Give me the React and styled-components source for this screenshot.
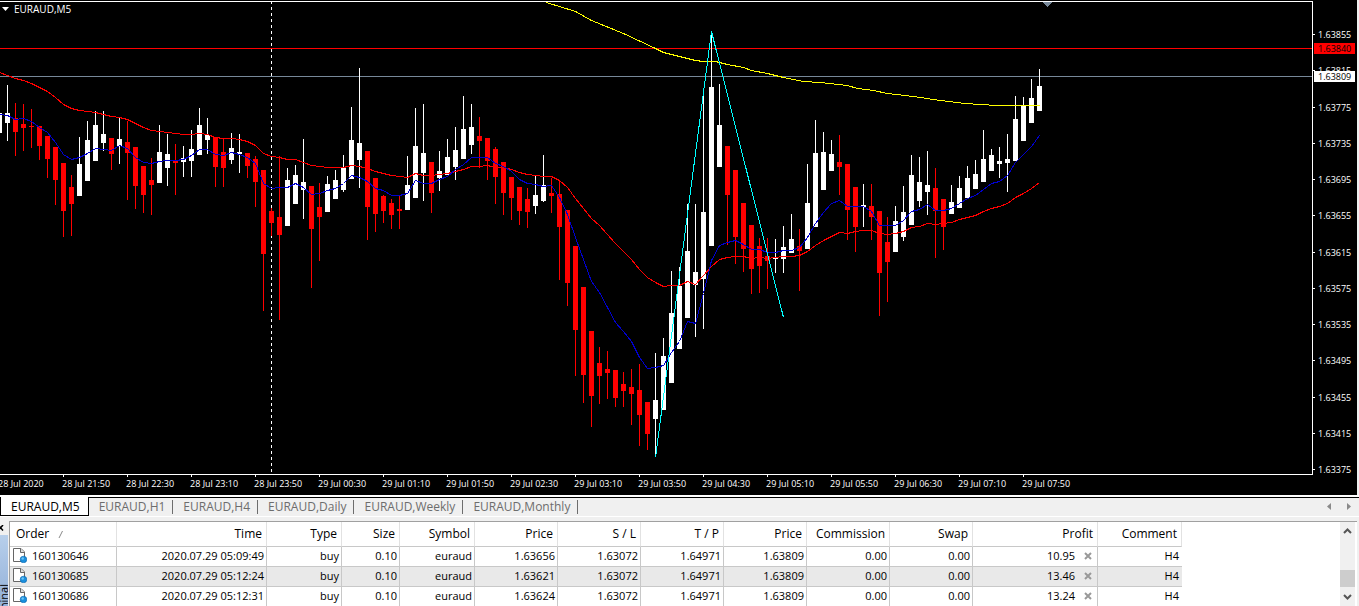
import React, { useState } from "react";
import styled, { createGlobalStyle } from "styled-components";

const GlobalStyle = createGlobalStyle`
  body {
    margin: 0;
    background: #f0f0f0;
    font-family: "Open Sans", "Noto Sans", sans-serif;
    overflow: hidden;
  }

  button {
    font-family: inherit;
    padding: 0;
    border: none;
    background: none;
    cursor: pointer;
  }
`;

const Page = styled.div`
  display: flex;
  flex-direction: column;
  height: 100vh;
  min-height: 400px;
`;

/* ---------- chart ---------- */

const ChartWindow = styled.section`
  display: grid;
  grid-template-columns: 1fr 44px;
  grid-template-rows: 1fr 20px;
  flex: 1;
  min-height: 0;
  margin-right: 2px;
  background: #000;
  color: #fff;
`;

const Plot = styled.div`
  position: relative;
  min-height: 0;
  margin-top: 1px;
  border: 1px solid #fff;
  border-left: none;
`;

const Drawing = styled.svg`
  display: block;
  width: 100%;
  height: 100%;
`;

const ChartTitle = styled.button`
  position: absolute;
  top: 0;
  left: 2px;
  display: flex;
  align-items: center;
  gap: 5px;
  height: 14px;
  color: #fff;
  font-size: 10px;
  line-height: 14px;
`;

const PriceAxis = styled.div`
  grid-column: 2;
  grid-row: 1 / 3;
  min-height: 0;
  padding: 28px 0 19px;
`;

const PriceScale = styled.div`
  position: relative;
  display: flex;
  flex-direction: column;
  justify-content: space-between;
  height: 100%;
  font-size: 9px;
  line-height: 13px;
`;

const PriceLabel = styled.div`
  display: flex;
  align-items: center;
  gap: 3px;

  &::before {
    content: "";
    width: 2px;
    height: 1px;
    background: #fff;
  }
`;

const PriceTag = styled.div`
  position: absolute;
  left: 1px;
  right: 2px;
  height: 11px;
  margin-top: 1px;
  padding-left: 4px;
  line-height: 11px;
  color: #000;
  background: ${(props) => props.$color};
`;

const TimeAxis = styled.div`
  display: grid;
  grid-template-columns: repeat(20, 64fr) 32fr;
  margin: 0 3px 0 -2px;
  font-size: 9px;
  line-height: 13px;
`;

const TimeLabel = styled.div`
  white-space: nowrap;

  &::before {
    content: "";
    display: block;
    width: 1px;
    height: 2px;
    margin-left: 1px;
    background: #fff;
  }
`;

/* ---------- chart tabs ---------- */

const TabBar = styled.nav`
  display: flex;
  justify-content: space-between;
  height: 22px;
  padding-top: 2px;
  box-sizing: border-box;
  border-bottom: 1px solid #fff;
  background: linear-gradient(#fff 2px, #000 2px, #000 3px, #f0f0f0 3px);
  margin-bottom: 4px;
`;

const Tabs = styled.div`
  display: flex;
`;

const Tab = styled.button`
  position: relative;
  height: 19px;
  padding: 0 8px 0 10px;
  font-size: 12px;
  line-height: 19px;
  color: ${(props) => (props.$active ? "#000" : "#6d6d6d")};
  background: ${(props) => (props.$active ? "#fff" : "none")};
  border: ${(props) => (props.$active ? "1px solid #000" : "none")};
  border-top: none;

  &::after {
    content: "";
    display: ${(props) => (props.$active ? "none" : "block")};
    position: absolute;
    top: 3px;
    right: 0;
    width: 1px;
    height: 14px;
    background: #6d6d6d;
  }
`;

const TabScroll = styled.div`
  display: flex;
  align-items: center;
  gap: 14px;
  padding-right: 8px;

  button {
    display: flex;
  }
`;

/* ---------- terminal ---------- */

const Terminal = styled.section`
  display: flex;
  height: 85px;
  overflow: hidden;
`;

const Side = styled.div`
  display: flex;
  flex-direction: column;
  width: 9px;
  overflow: hidden;
`;

const CloseButton = styled.button`
  display: flex;
  height: 14px;
  align-items: center;
`;

const SideTitle = styled.div`
  flex: 1;
  width: 8px;
  padding-top: 49px;
  overflow: hidden;
  box-sizing: border-box;
  background: linear-gradient(#b7cfeb, #93b0d8);

  span {
    display: block;
    width: 8px;
    font-size: 11px;
    line-height: 8px;
    writing-mode: vertical-rl;
    transform: rotate(180deg);
  }
`;

const Orders = styled.div`
  display: flex;
  flex: 1;
  justify-content: space-between;
  min-width: 0;
  margin-right: 2px;
  border-top: 1px solid #a0a0a0;
  border-left: 1px solid #a0a0a0;
  background: #fff;
`;

const Table = styled.table`
  flex: none;
  width: 1172px;
  height: 85px;
  table-layout: fixed;
  border-collapse: separate;
  border-spacing: 0;
  font-size: 11px;
  line-height: 16px;
  color: #000;
`;

const HeadCell = styled.th`
  height: 25px;
  padding: 0 ${(props) => (props.$left ? 0 : 4)}px 0 6px;
  box-sizing: border-box;
  border-right: 1px solid #e2e2e2;
  border-bottom: 1px solid #c8c8c8;
  font-size: 12px;
  font-weight: 400;
  text-align: ${(props) => (props.$left ? "left" : "right")};

  svg {
    margin-left: 8px;
  }
`;

const Row = styled.tr`
  background: ${(props) => (props.$shaded ? "#e9e9e9" : "#fff")};
`;

const Cell = styled.td`
  height: 20px;
  padding: 0 2px 2px 0;
  box-sizing: border-box;
  border-right: 1px solid #c8c8c8;
  border-bottom: 1px solid #c8c8c8;
  text-align: right;

  &:last-child {
    border-right: none;
    padding-right: 3px;
  }
`;

const OrderId = styled.div`
  display: flex;
  align-items: center;
  gap: 5px;
  padding-left: 3px;
`;

const Profit = styled.div`
  display: flex;
  justify-content: flex-end;
  align-items: center;
  gap: 9px;
  padding-right: 3px;

  button {
    display: flex;
  }
`;

const ScrollBar = styled.div`
  display: flex;
  flex-direction: column;
  align-items: center;
  width: 15px;
  height: 84px;
  margin-right: 2px;
  background: #f0f0f0;

  button {
    display: flex;
    align-items: center;
    justify-content: center;
    width: 15px;
    height: 18px;
  }
`;

const Thumb = styled.div`
  width: 15px;
  height: 17px;
  margin: auto 0 1px;
  background: #cdcdcd;
`;

// [high, body top, body bottom, low, rising]
const candles = [
  [113, 113, 133, 133, 1], [85, 113, 123, 141, 1], [103, 118, 132, 156, 0],
  [104, 124, 128, 151, 0], [109, 126, 127, 148, 0], [126, 126, 146, 160, 0],
  [136, 136, 159, 178, 0], [147, 147, 180, 205, 0], [163, 163, 211, 237, 0],
  [175, 187, 204, 236, 0], [137, 164, 196, 196, 1], [121, 140, 181, 181, 1],
  [111, 125, 161, 161, 1], [111, 134, 143, 151, 1], [138, 138, 154, 170, 0],
  [118, 139, 146, 164, 1], [121, 142, 153, 200, 0], [147, 147, 186, 209, 0],
  [166, 166, 195, 213, 0], [158, 180, 185, 215, 0], [125, 152, 183, 183, 1],
  [134, 154, 168, 186, 1], [144, 160, 163, 195, 0], [146, 158, 162, 177, 1],
  [130, 149, 161, 177, 1], [108, 125, 155, 155, 1], [118, 135, 140, 154, 1],
  [137, 137, 167, 187, 0], [139, 152, 168, 187, 0], [133, 148, 160, 164, 1],
  [134, 152, 154, 173, 1], [153, 153, 166, 178, 0], [156, 159, 182, 207, 0],
  [170, 170, 254, 311, 0], [208, 211, 223, 236, 0], [156, 217, 235, 320, 0],
  [168, 180, 226, 226, 1], [165, 175, 204, 204, 1], [139, 182, 190, 219, 1],
  [186, 186, 229, 288, 0], [183, 207, 217, 261, 0], [176, 184, 212, 212, 1],
  [170, 180, 199, 199, 1], [155, 167, 190, 192, 1], [107, 140, 179, 179, 1],
  [68, 143, 160, 188, 1], [151, 151, 207, 240, 0], [178, 178, 214, 232, 0],
  [195, 196, 211, 223, 0], [199, 203, 215, 229, 0], [196, 209, 211, 229, 0],
  [156, 185, 210, 210, 1], [108, 146, 198, 198, 1], [104, 153, 173, 201, 1],
  [162, 162, 193, 213, 0], [151, 171, 178, 191, 1], [139, 157, 175, 175, 1],
  [127, 150, 167, 180, 1], [96, 129, 159, 159, 1], [104, 127, 145, 154, 1],
  [117, 136, 141, 168, 0], [138, 138, 161, 180, 0], [147, 149, 177, 204, 0],
  [162, 162, 193, 215, 0], [177, 177, 198, 220, 0], [187, 187, 211, 225, 0],
  [188, 199, 212, 228, 0], [176, 195, 206, 214, 1], [155, 185, 201, 202, 1],
  [178, 193, 196, 213, 0], [180, 194, 227, 280, 0], [210, 210, 283, 306, 0],
  [246, 246, 330, 376, 0], [287, 287, 375, 403, 0], [331, 331, 396, 427, 0],
  [347, 363, 376, 404, 0], [351, 369, 373, 399, 0], [370, 370, 398, 407, 0],
  [372, 384, 391, 407, 0], [369, 387, 394, 425, 0], [364, 390, 415, 446, 0],
  [402, 402, 434, 450, 0], [353, 400, 419, 457, 1], [338, 356, 410, 410, 1],
  [271, 313, 383, 383, 1], [267, 286, 349, 349, 1], [204, 251, 318, 318, 1],
  [204, 272, 285, 337, 1], [96, 212, 279, 329, 1], [33, 87, 246, 246, 1],
  [84, 125, 167, 167, 1], [146, 146, 195, 245, 0], [170, 170, 237, 264, 0],
  [203, 203, 249, 272, 0], [225, 225, 269, 294, 0], [238, 246, 266, 293, 0],
  [238, 256, 261, 289, 0], [239, 258, 259, 273, 1], [226, 247, 259, 273, 1],
  [214, 239, 253, 253, 1], [229, 246, 251, 291, 0], [164, 203, 249, 249, 1],
  [120, 153, 227, 227, 1], [132, 152, 190, 190, 1], [140, 154, 171, 171, 1],
  [135, 162, 167, 195, 0], [164, 164, 210, 240, 0], [187, 187, 227, 252, 0],
  [184, 205, 207, 227, 1], [184, 206, 217, 240, 0], [211, 211, 273, 316, 0],
  [217, 242, 262, 302, 0], [206, 221, 252, 252, 1], [186, 212, 237, 241, 1],
  [155, 175, 225, 225, 1], [157, 182, 201, 207, 1], [151, 185, 192, 215, 1],
  [168, 188, 211, 258, 0], [199, 199, 227, 250, 0], [185, 202, 214, 214, 1],
  [176, 188, 208, 208, 1], [166, 178, 198, 198, 1], [160, 174, 189, 189, 1],
  [130, 159, 182, 182, 1], [149, 155, 171, 171, 1], [147, 161, 164, 178, 1],
  [134, 159, 163, 192, 1], [96, 119, 161, 161, 1], [97, 106, 141, 141, 1],
  [79, 98, 123, 123, 1], [69, 86, 111, 111, 1],
];

const candleX = (index) => index * 8 - 1;

// moving averages, one value for each candle
const slowAverage = [
  72, 75, 78, 80, 83, 87, 91, 97, 104, 108, 110, 111, 112, 114, 116, 117, 119,
  123, 127, 130, 131, 132, 133, 134, 134, 133, 134, 137, 138, 138, 139, 141,
  145, 153, 156, 157, 159, 159, 162, 165, 166, 167, 167, 167, 165, 166, 168,
  171, 173, 175, 176, 177, 173, 175, 175, 174, 173, 171, 169, 166, 166, 165,
  167, 167, 169, 172, 174, 175, 176, 176, 180, 187, 198, 208, 218, 225, 234,
  243, 251, 259, 269, 277, 282, 286, 285, 285, 281, 284, 275, 266, 259, 257,
  256, 256, 258, 257, 258, 257, 256, 256, 255, 251, 245, 240, 236, 232, 233,
  231, 230, 230, 233, 234, 233, 231, 227, 226, 223, 224, 223, 222, 219, 217,
  215, 211, 208, 206, 203, 197, 193, 188, 182,
];

const fastAverage = [
  114, 115, 119, 118, 121, 127, 132, 142, 154, 159, 157, 153, 148, 149, 150,
  145, 148, 157, 162, 163, 161, 160, 160, 159, 155, 149, 149, 154, 155, 152,
  154, 157, 163, 183, 188, 187, 187, 183, 187, 194, 193, 190, 188, 183, 175,
  177, 181, 188, 190, 195, 195, 193, 180, 183, 183, 179, 176, 169, 164, 157,
  157, 157, 163, 166, 171, 179, 183, 184, 186, 185, 197, 214, 237, 259, 281,
  292, 307, 322, 331, 341, 357, 368, 367, 365, 352, 341, 321, 323, 293, 260,
  245, 242, 240, 244, 249, 249, 252, 252, 250, 250, 247, 237, 223, 212, 203,
  200, 206, 206, 206, 211, 225, 225, 225, 220, 211, 209, 204, 210, 210, 208,
  203, 198, 195, 189, 183, 181, 175, 162, 154, 146, 135,
];

const longAverage =
  "546,2 575,11 591,20 623,33 655,48 663,52 679,56 695,60 703,61 715,61 727,64 743,67 751,70 767,73 783,77 803,81 820,82 847,85 857,88 873,90 887,93 913,96 940,100 965,103 980,104 997,105 1039,105";

const toPoints = (values) =>
  values.map((value, index) => `${candleX(index)},${value}`).join(" ");

const priceTop = 1.63855;
const priceBottom = 1.63375;
const prices = [
  "1.63855", "1.63815", "1.63775", "1.63735", "1.63695", "1.63655", "1.63615",
  "1.63575", "1.63535", "1.63495", "1.63455", "1.63415", "1.63375",
];

const times = [
  "28 Jul 2020", "28 Jul 21:50", "28 Jul 22:30", "28 Jul 23:10",
  "28 Jul 23:50", "29 Jul 00:30", "29 Jul 01:10", "29 Jul 01:50",
  "29 Jul 02:30", "29 Jul 03:10", "29 Jul 03:50", "29 Jul 04:30",
  "29 Jul 05:10", "29 Jul 05:50", "29 Jul 06:30", "29 Jul 07:10",
  "29 Jul 07:50",
];

const periods = ["M5", "H1", "H4", "Daily", "Weekly", "Monthly"];

const columns = [
  { label: "Order", width: 107 },
  { label: "Time", width: 150 },
  { label: "Type", width: 75 },
  { label: "Size", width: 58 },
  { label: "Symbol", width: 75 },
  { label: "Price", width: 83 },
  { label: "S / L", width: 83 },
  { label: "T / P", width: 83 },
  { label: "Price", width: 83 },
  { label: "Commission", width: 83 },
  { label: "Swap", width: 83 },
  { label: "Profit", width: 125 },
  { label: "Comment", width: 84 },
];

const orders = [
  { id: "160130646", time: "2020.07.29 05:09:49", price: "1.63656", profit: "10.95" },
  { id: "160130685", time: "2020.07.29 05:12:24", price: "1.63621", profit: "13.46" },
  { id: "160130686", time: "2020.07.29 05:12:31", price: "1.63624", profit: "13.24" },
];

function Candle({ index, data }) {
  const [high, top, bottom, low, rising] = data;
  const x = candleX(index);

  return (
    <g fill={rising ? "#fff" : "#f00"}>
      <rect x={x} y={high} width="1" height={low - high} />
      <rect x={x - 2} y={top} width="5" height={bottom - top} />
    </g>
  );
}

function CandleChart() {
  return (
    <Drawing
      viewBox="0 2 1312 472"
      preserveAspectRatio="none"
      shapeRendering="crispEdges"
    >
      <rect x="0" y="48" width="1312" height="1" fill="#f00" />
      <rect x="0" y="76" width="1312" height="1" fill="#778899" />
      <path d="M271.5 1V474" stroke="#fff" strokeDasharray="3 3" />
      <path d="M1043 2h9l-4.500 5z" fill="#778899" />
      {candles.map((data, index) => (
        <Candle key={index} index={index} data={data} />
      ))}
      <g fill="none" transform="translate(0.5 0.5)">
        <polyline points={longAverage} stroke="#ff0" />
        <polyline points={toPoints(slowAverage)} stroke="#f00" />
        <polyline points={toPoints(fastAverage)} stroke="#0000cd" />
        <polyline points="655,457 711,31 783,317" stroke="#0ff" />
      </g>
    </Drawing>
  );
}

function PriceMarker({ price, color }) {
  const share = (priceTop - Number(price)) / (priceTop - priceBottom);

  return (
    <PriceTag $color={color} style={{ top: `calc((100% - 13px) * ${share})` }}>
      {price}
    </PriceTag>
  );
}

function OrderIcon() {
  return (
    <svg width="14" height="15" viewBox="0 0 14 15" aria-hidden="true">
      <path
        d="M.5.500h7.500l3.500 3.500v9.500h-11z"
        fill="#fff"
        stroke="#666"
      />
      <path d="M7.500.500v4h4" fill="#ddd" stroke="#666" />
      <circle cx="10.500" cy="11.500" r="3.300" fill="#1a8fdc" stroke="#0b64ad" strokeWidth=".6" />
      <circle cx="9.700" cy="10.500" r="1.200" fill="#6cc4f5" />
    </svg>
  );
}

function Chevron({ up }) {
  return (
    <svg width="9" height="6" viewBox="0 0 9 6" aria-hidden="true">
      <path
        d={up ? "M1 5l3.500-3.500L8 5" : "M1 1l3.500 3.500L8 1"}
        fill="none"
        stroke="#555"
        strokeWidth="2"
      />
    </svg>
  );
}

function OrderTable({ rows, onClose }) {
  return (
    <Table>
      <colgroup>
        {columns.map((column, index) => (
          <col key={index} width={column.width} />
        ))}
      </colgroup>
      <thead>
        <tr>
          {columns.map((column, index) => (
            <HeadCell key={index} scope="col" $left={index === 0}>
              {column.label}
              {index === 0 && (
                <svg width="8" height="8" viewBox="0 0 8 8" aria-hidden="true">
                  <path d="M2 8L5.500 1" stroke="#888" />
                </svg>
              )}
            </HeadCell>
          ))}
        </tr>
      </thead>
      <tbody>
        {rows.map((order, index) => (
          <Row key={order.id} $shaded={index % 2 === 1}>
            <Cell>
              <OrderId>
                <OrderIcon />
                {order.id}
              </OrderId>
            </Cell>
            <Cell>{order.time}</Cell>
            <Cell>buy</Cell>
            <Cell>0.10</Cell>
            <Cell>euraud</Cell>
            <Cell>{order.price}</Cell>
            <Cell>1.63072</Cell>
            <Cell>1.64971</Cell>
            <Cell>1.63809</Cell>
            <Cell>0.00</Cell>
            <Cell>0.00</Cell>
            <Cell>
              <Profit>
                {order.profit}
                <button
                  type="button"
                  aria-label={`Close order ${order.id}`}
                  onClick={() => onClose(order.id)}
                >
                  <svg width="8" height="8" viewBox="0 0 8 8" aria-hidden="true">
                    <path d="M1 1l6 6M7 1L1 7" stroke="#999" strokeWidth="2" />
                  </svg>
                </button>
              </Profit>
            </Cell>
            <Cell>H4</Cell>
          </Row>
        ))}
      </tbody>
    </Table>
  );
}

function App() {
  const [period, setPeriod] = useState("M5");
  const [rows, setRows] = useState(orders);

  const handleClose = (id) => {
    setRows(rows.filter((order) => order.id !== id));
  };

  return (
    <Page>
      <GlobalStyle />
      <ChartWindow>
        <Plot>
          <CandleChart />
          <ChartTitle type="button">
            <svg width="7" height="4" viewBox="0 0 7 4" aria-hidden="true">
              <path d="M0 0h7L3.500 4z" fill="#fff" />
            </svg>
            EURAUD,M5
          </ChartTitle>
        </Plot>
        <PriceAxis>
          <PriceScale>
            {prices.map((price) => (
              <PriceLabel key={price}>{price}</PriceLabel>
            ))}
            <PriceMarker price="1.63840" color="#f00" />
            <PriceMarker price="1.63809" color="#fff" />
          </PriceScale>
        </PriceAxis>
        <TimeAxis>
          {times.map((time) => (
            <TimeLabel key={time}>{time}</TimeLabel>
          ))}
        </TimeAxis>
      </ChartWindow>

      <TabBar>
        <Tabs>
          {periods.map((name) => (
            <Tab
              key={name}
              type="button"
              $active={name === period}
              onClick={() => setPeriod(name)}
            >
              EURAUD,{name}
            </Tab>
          ))}
        </Tabs>
        <TabScroll>
          <button type="button" aria-label="Previous charts">
            <svg width="5" height="7" viewBox="0 0 5 7" aria-hidden="true">
              <path d="M4 0v7L0 3.500z" fill="#8a8a8a" />
            </svg>
          </button>
          <button type="button" aria-label="Next charts">
            <svg width="5" height="7" viewBox="0 0 5 7" aria-hidden="true">
              <path d="M1 0v7l4-3.500z" fill="#8a8a8a" />
            </svg>
          </button>
        </TabScroll>
      </TabBar>

      <Terminal>
        <Side>
          <CloseButton type="button" aria-label="Close terminal">
            <svg width="4" height="6" viewBox="2 0 4 6" aria-hidden="true">
              <path d="M0 0l5 5.500M5 0L0 5.500" stroke="#000" strokeWidth="1.500" />
            </svg>
          </CloseButton>
          <SideTitle>
            <span>Terminal</span>
          </SideTitle>
        </Side>
        <Orders>
          <OrderTable rows={rows} onClose={handleClose} />
          <ScrollBar>
            <button type="button" aria-label="Scroll up">
              <Chevron up />
            </button>
            <Thumb />
            <button type="button" aria-label="Scroll down">
              <Chevron />
            </button>
          </ScrollBar>
        </Orders>
      </Terminal>
    </Page>
  );
}

export default App;
